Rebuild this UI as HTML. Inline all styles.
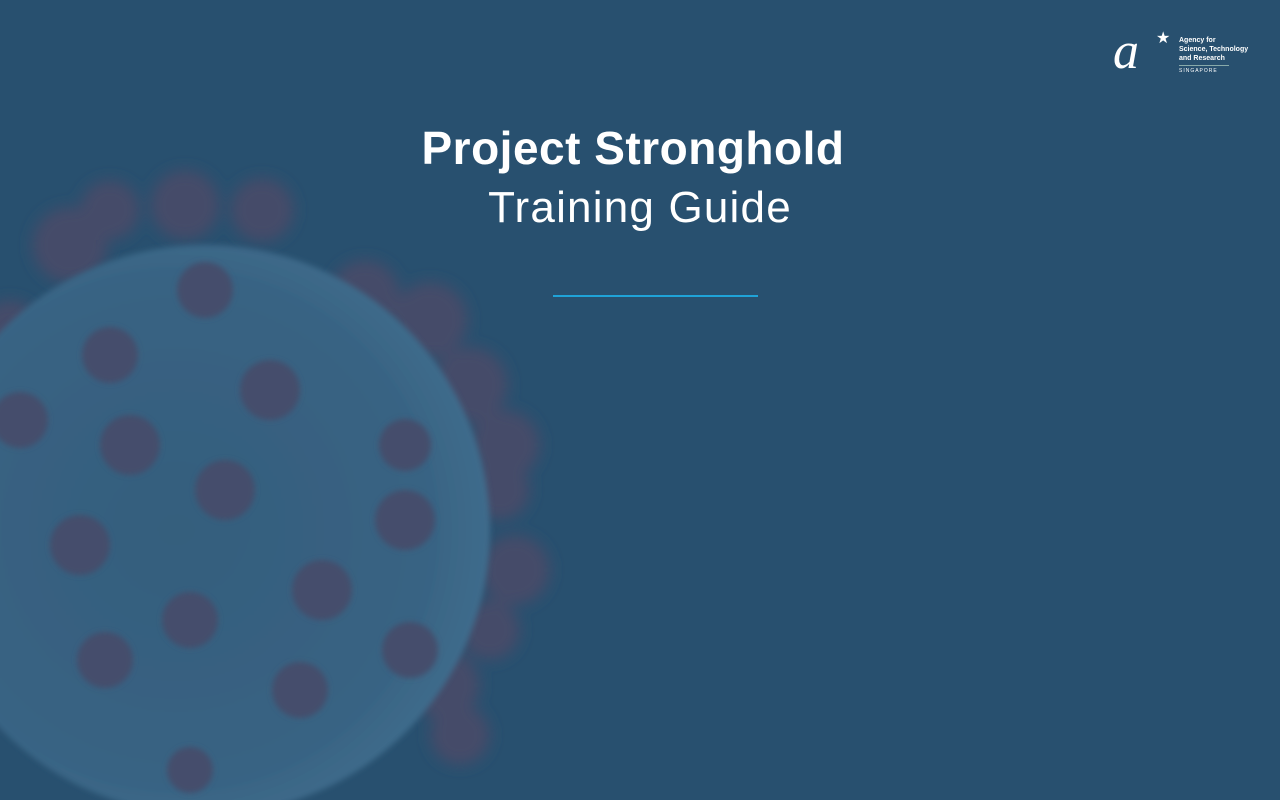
<!DOCTYPE html>
<html><head><meta charset="utf-8"><style>
html,body{margin:0;padding:0;width:1280px;height:800px;overflow:hidden;background:#28506f}
.t1{position:absolute;left:0;width:1266px;text-align:center;top:121px;font:bold 46px "Liberation Sans",sans-serif;color:#fff;letter-spacing:0.5px}
.t2{position:absolute;left:0;width:1280px;text-align:center;top:183px;font:44px "Liberation Sans",sans-serif;color:#fff;letter-spacing:1.2px}
.line{position:absolute;left:553px;top:295px;width:205px;height:2px;background:#1fa3d8}
</style></head><body>
<svg width="1280" height="800" style="position:absolute;left:0;top:0">
<defs>
<radialGradient id="b" cx="0.45" cy="0.5" r="0.55">
<stop offset="0" stop-color="#355e7d"/><stop offset="0.8" stop-color="#386383"/><stop offset="1" stop-color="#3f6c8c"/></radialGradient>
<filter id="f1"><feGaussianBlur stdDeviation="7"/></filter>
<filter id="f2"><feGaussianBlur stdDeviation="3"/></filter>
</defs>
<g filter="url(#f1)" fill="#444c69">
<circle cx="70" cy="245" r="38"/><circle cx="110" cy="210" r="30"/><circle cx="185" cy="205" r="35"/><circle cx="262" cy="210" r="32"/>
<circle cx="365" cy="295" r="35"/><circle cx="430" cy="320" r="38"/><circle cx="470" cy="385" r="38"/><circle cx="505" cy="445" r="35"/>
<circle cx="500" cy="490" r="30"/><circle cx="515" cy="570" r="35"/><circle cx="490" cy="630" r="30"/><circle cx="445" cy="685" r="35"/><circle cx="460" cy="735" r="30"/><circle cx="10" cy="330" r="30"/>
</g>
<circle cx="205" cy="530" r="285" fill="url(#b)" filter="url(#f2)"/>
<g filter="url(#f2)" fill="#444e6c">
<circle cx="205" cy="290" r="28"/><circle cx="110" cy="355" r="28"/><circle cx="270" cy="390" r="30"/><circle cx="130" cy="445" r="30"/><circle cx="20" cy="420" r="28"/>
<circle cx="225" cy="490" r="30"/><circle cx="405" cy="520" r="30"/><circle cx="405" cy="445" r="26"/><circle cx="80" cy="545" r="30"/>
<circle cx="190" cy="620" r="28"/><circle cx="322" cy="590" r="30"/><circle cx="105" cy="660" r="28"/><circle cx="300" cy="690" r="28"/><circle cx="410" cy="650" r="28"/><circle cx="190" cy="770" r="23"/>
</g>
</svg>
<div class="t1">Project Stronghold</div>
<div class="t2">Training Guide</div>
<div class="line"></div>
<div style="position:absolute;left:1113px;top:28px;width:150px;height:50px;color:#fff">
<div style="position:absolute;left:0;top:0px;font:italic 52px 'Liberation Serif',serif;line-height:48px">a</div>
<div style="position:absolute;left:43px;top:0px;font:16px 'DejaVu Sans',sans-serif">★</div>
<div style="position:absolute;left:66px;top:8px;font:bold 7px/9px 'Liberation Sans',sans-serif">Agency for<br>Science, Technology<br>and Research</div>
<div style="position:absolute;left:66px;top:37px;width:50px;border-top:1px solid #8aa;"></div>
<div style="position:absolute;left:66px;top:40px;font:5px 'Liberation Sans',sans-serif;letter-spacing:1px">SINGAPORE</div>
</div>
</body></html>
